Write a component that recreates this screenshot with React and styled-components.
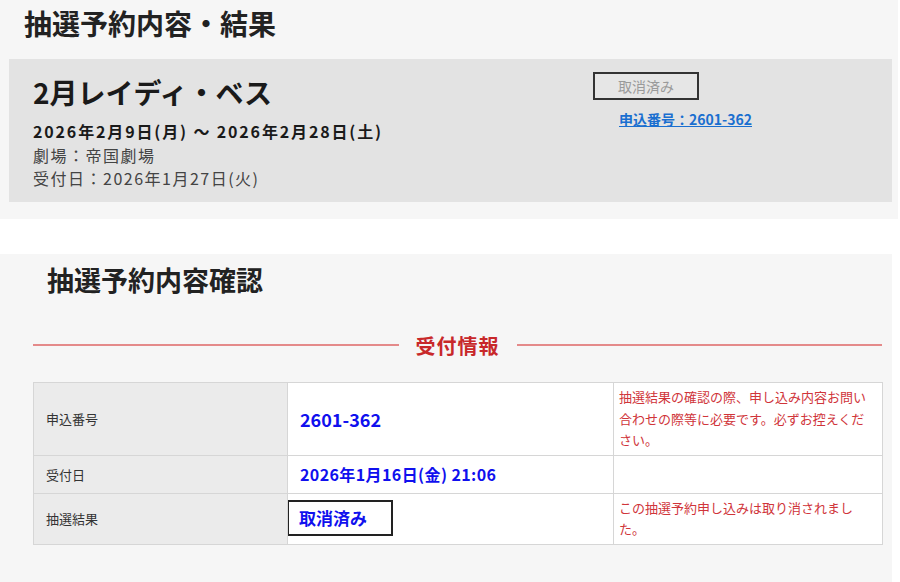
import React from "react";
import styled, { createGlobalStyle } from "styled-components";

const GlobalStyle = createGlobalStyle`
  body {
    margin: 0;
    background: #ffffff;
    font-family: "Noto Sans CJK JP", "Noto Sans", sans-serif;
    color: #222;
  }
`;

const rows = [
  {
    label: "申込番号",
    value: "2601-362",
    kind: "big",
    note: "抽選結果の確認の際、申し込み内容お問い合わせの際等に必要です。必ずお控えください。",
    height: 71,
  },
  { label: "受付日", value: "2026年1月16日(金) 21:06", kind: "text", note: "", height: 38 },
  {
    label: "抽選結果",
    value: "取消済み",
    kind: "box",
    note: "この抽選予約申し込みは取り消されました。",
    height: 51,
  },
];

const App = () => {
  return (
    <Page>
      <GlobalStyle />
      <TopSection>
        <PageTitle>抽選予約内容・結果</PageTitle>
        <Card>
          <Info>
            <ShowTitle>2月レイディ・ベス</ShowTitle>
            <Period>2026年2月9日(月) ～ 2026年2月28日(土)</Period>
            <InfoLine>劇場：帝国劇場</InfoLine>
            <InfoLine>受付日：2026年1月27日(火)</InfoLine>
          </Info>
          <Side>
            <StatusButton disabled>取消済み</StatusButton>
            <NumberLink href="#">申込番号：2601-362</NumberLink>
          </Side>
        </Card>
      </TopSection>

      <DetailSection>
        <SectionTitle>抽選予約内容確認</SectionTitle>
        <Divider>
          <span>受付情報</span>
        </Divider>
        <Table>
          <colgroup>
            <col style={{ width: 254 }} />
            <col style={{ width: 326 }} />
            <col style={{ width: 269 }} />
          </colgroup>
          <tbody>
            {rows.map((r) => (
              <tr key={r.label} style={{ height: r.height }}>
                <LabelCell>{r.label}</LabelCell>
                <ValueCell $kind={r.kind}>
                  {r.kind === "box" ? <ResultBox>{r.value}</ResultBox> : r.value}
                </ValueCell>
                <NoteCell>{r.note}</NoteCell>
              </tr>
            ))}
          </tbody>
        </Table>
      </DetailSection>
    </Page>
  );
};

const Page = styled.div`
  width: 900px;
  min-height: 582px;
  overflow: hidden;
`;

const TopSection = styled.section`
  width: 898px;
  box-sizing: border-box;
  background: #f6f6f6;
  padding: 6px 6px 17px 9px;
`;

const PageTitle = styled.h1`
  margin: 0 0 19px 15px;
  font-size: 28px;
  line-height: 34px;
  font-weight: 700;
  color: #222;
`;

const Card = styled.div`
  display: grid;
  grid-template-columns: 560px 1fr;
  height: 143px;
  box-sizing: border-box;
  background: #e3e3e3;
  padding: 13px 0 0 24px;
`;

const Info = styled.div`
  display: flex;
  flex-direction: column;
  padding-top: 4px;
`;

const ShowTitle = styled.h2`
  margin: 0 0 11px;
  font-size: 28px;
  line-height: 33px;
  font-weight: 700;
  color: #1a1a1a;
`;

const Period = styled.div`
  font-size: 16px;
  line-height: 23.5px;
  font-weight: 700;
  letter-spacing: 1.85px;
  color: #1a1a1a;
`;

const InfoLine = styled.div`
  font-size: 16px;
  line-height: 23.5px;
  letter-spacing: 1.5px;
  color: #444;
`;

const Side = styled.div`
  display: flex;
  flex-direction: column;
  align-items: flex-start;
`;

const StatusButton = styled.button`
  width: 106px;
  height: 28px;
  box-sizing: border-box;
  border: 2px solid #333;
  background: #e6e6e6;
  color: #9a9a9a;
  font-family: inherit;
  font-size: 14px;
  padding: 0;
`;

const NumberLink = styled.a`
  margin: 10px 0 0 26px;
  font-size: 14px;
  line-height: 18px;
  font-weight: 700;
  color: #1a6fd0;
  text-decoration: underline;
`;

const DetailSection = styled.section`
  width: 892px;
  box-sizing: border-box;
  margin-top: 35px;
  background: #f6f6f6;
  padding: 9px 10px 40px 33px;
`;

const SectionTitle = styled.h2`
  margin: 0 0 35px 14px;
  font-size: 27px;
  line-height: 34px;
  font-weight: 700;
  color: #222;
`;

const Divider = styled.div`
  display: flex;
  align-items: center;
  gap: 17px;
  height: 26px;
  margin-bottom: 24px;

  &::before,
  &::after {
    content: "";
    flex: 1;
    height: 2px;
    background: #e48a8a;
  }

  span {
    font-size: 20px;
    letter-spacing: 1px;
    font-weight: 700;
    color: #c8282a;
  }
`;

const Table = styled.table`
  width: 849px;
  border-collapse: collapse;
  table-layout: fixed;
  background: #fff;

  td {
    border: 1px solid #d6d6d6;
    vertical-align: middle;
  }
`;

const LabelCell = styled.td`
  background: #ebebeb;
  padding: 0 12px;
  font-size: 13px;
  color: #333;
`;

const ValueCell = styled.td`
  padding: ${(p) => (p.$kind === "box" ? "0" : "0 12px")};
  color: #1010ee;
  font-weight: 700;
  font-size: ${(p) => (p.$kind === "big" ? "18px" : "16px")};
  letter-spacing: ${(p) => (p.$kind === "text" ? "0.4px" : "0")};
  white-space: nowrap;
`;

const ResultBox = styled.div`
  width: 106px;
  height: 36px;
  box-sizing: border-box;
  border: 2px solid #222;
  padding-left: 10px;
  display: flex;
  align-items: center;
  font-size: 17px;
  color: #1010ee;
  margin: 2px 0 4px -1px;
`;

const NoteCell = styled.td`
  padding: 3px 6px 4px 5px;
  font-size: 13px;
  line-height: 21.5px;
  color: #d0353a;
`;

export default App;
